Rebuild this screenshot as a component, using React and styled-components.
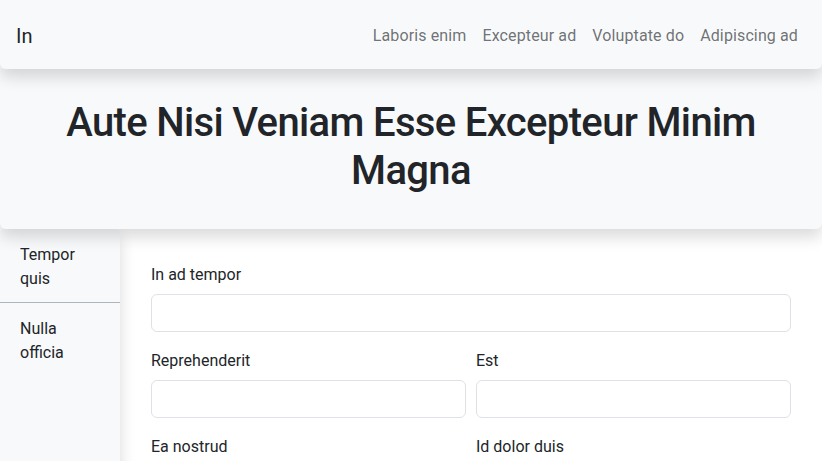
import styled, { createGlobalStyle } from "styled-components";

const GlobalStyle = createGlobalStyle`
  * { box-sizing: border-box; }
  body {
    margin: 0;
    font-family: Roboto, "Liberation Sans", sans-serif;
    color: #212529;
    background: #fff;
    font-size: 16px;
    line-height: 1.5;
  }
`;

const navLinks = ["Laboris enim", "Excepteur ad", "Voluptate do", "Adipiscing ad"];

const Navbar = styled.nav`
  position: relative;
  z-index: 3;
  display: flex;
  align-items: center;
  justify-content: space-between;
  height: 69px;
  padding: 2px 16px 0;
  background: #f8f9fa;
  border-radius: 0 0 6px 6px;
  box-shadow: 0 8px 16px rgba(0, 0, 0, 0.15);
`;

const Brand = styled.a`
  font-size: 20px;
  color: #212529;
  text-decoration: none;
`;

const NavList = styled.div`
  display: flex;
`;

const NavLink = styled.a`
  padding: 8px;
  color: rgba(33, 37, 41, 0.65);
  letter-spacing: 0.12px;
  text-decoration: none;
`;

const Hero = styled.header`
  position: relative;
  z-index: 2;
  height: 160px;
  padding: 30px 48px 0;
  background: #f8f9fa;
  border-radius: 0 0 6px 6px;
  box-shadow: 0 8px 16px rgba(0, 0, 0, 0.15);
`;

const Title = styled.h1`
  margin: 0;
  font-size: 40px;
  font-weight: 500;
  line-height: 1.2;
  letter-spacing: -0.65px;
  text-align: center;
`;

const Body = styled.div`
  display: flex;
  min-height: 232px;
`;

const Sidebar = styled.aside`
  position: relative;
  z-index: 1;
  width: 120px;
  flex-shrink: 0;
  background: #f8f9fa;
  border-radius: 6px 6px 0 0;
  box-shadow: 0 8px 16px rgba(0, 0, 0, 0.15);
`;

const SideItem = styled.a`
  display: block;
  padding: 14px 20px 11px;
  color: #212529;
  text-decoration: none;
  border-bottom: ${(p) => (p.divided ? "1px solid #adb5bd" : "none")};
`;

const Main = styled.main`
  flex: 1;
  padding: 33px 31px 0;
`;

const Row = styled.div`
  display: grid;
  grid-template-columns: ${(p) => (p.cols === 2 ? "1fr 1fr" : "1fr")};
  column-gap: 10px;
`;

const Field = styled.div`
  margin-bottom: 16px;
`;

const Label = styled.label`
  display: block;
  padding-top: 1px;
  margin-bottom: 7px;
`;

const Input = styled.input`
  display: block;
  width: 100%;
  height: 38px;
  padding: 6px 12px;
  font: inherit;
  border: 1px solid #dee2e6;
  border-radius: 6px;
  background: #fff;
`;

const rows = [["In ad tempor"], ["Reprehenderit", "Est"], ["Ea nostrud", "Id dolor duis"]];

export default function App() {
  return (
    <>
      <GlobalStyle />
      <Navbar>
        <Brand href="#">In</Brand>
        <NavList>
          {navLinks.map((l) => (
            <NavLink key={l} href="#">
              {l}
            </NavLink>
          ))}
        </NavList>
      </Navbar>
      <Hero>
        <Title>Aute Nisi Veniam Esse Excepteur Minim Magna</Title>
      </Hero>
      <Body>
        <Sidebar>
          <SideItem href="#" divided>
            Tempor quis
          </SideItem>
          <SideItem href="#">Nulla officia</SideItem>
        </Sidebar>
        <Main>
          {rows.map((r, i) => (
            <Row key={i} cols={r.length}>
              {r.map((label) => (
                <Field key={label}>
                  <Label>{label}</Label>
                  <Input type="text" />
                </Field>
              ))}
            </Row>
          ))}
        </Main>
      </Body>
    </>
  );
}
